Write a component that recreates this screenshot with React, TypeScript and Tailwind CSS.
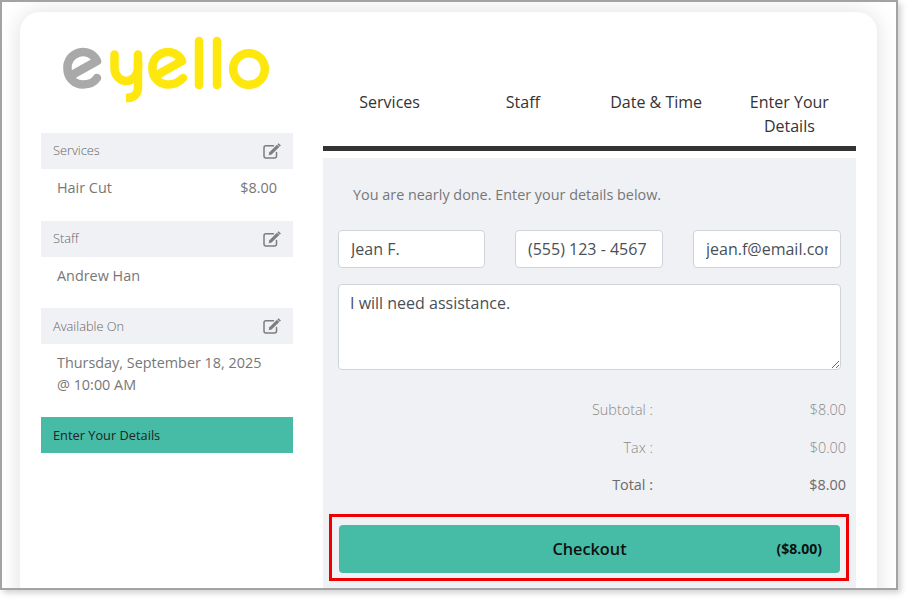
import React from "react";

function Logo() {
  return (
    <svg viewBox="60 35 215 70" className="block w-[215px] h-[70px] ml-[19px]" fill="none" strokeLinecap="round" strokeLinejoin="round">
      <path d="M72 75 L97 61 A15.5 15.5 0 0 0 67.5 69 A15.5 15.5 0 0 0 83 84.5 C90 84.5 94 82.5 97 78" stroke="#a9a9a9" strokeWidth="8.5" />
      <g stroke="#fde70c" strokeWidth="8.5">
        <path d="M114.5 54.5 V68 A11.75 13 0 0 0 138 68 V54.5" />
        <path d="M138 62 V87 Q138 98 126 98" strokeLinecap="butt" strokeWidth="8.5" />
        <path d="M157 75 L182 61 A15.5 15.5 0 0 0 152.5 69 A15.5 15.5 0 0 0 168 84.5 C174 84.5 179 82.5 183 78" />
        <path d="M199 41 V85" />
        <path d="M217 41 V85" />
        <circle cx="249" cy="69" r="15.8" />
      </g>
    </svg>
  );
}

function EditIcon() {
  return (
    <svg viewBox="0 0 18 16" className="block w-[18px] h-4 text-[#7d7d7d]" fill="none">
      <path d="M10.5 2.8 H3 A2 2 0 0 0 1 4.8 V13 A2 2 0 0 0 3 15 H11.5 A2 2 0 0 0 13.5 13 V9.5" stroke="currentColor" strokeWidth="1.5" strokeLinecap="round" />
      <path d="M14 1.8 L16.3 4.1 L8.6 11.5 L5.7 12.2 L6.4 9.3 Z" fill="currentColor" />
      <path d="M15 .8 L17.3 3.1" stroke="currentColor" strokeWidth="1.6" />
    </svg>
  );
}

function SideHeader({ title, textClass = "" }: { title: string; textClass?: string }) {
  return (
    <div className="flex items-center justify-between h-9 bg-[#f0f1f5] pl-3 pr-3">
      <span className={`text-[12.8px] font-light text-[#666] ${textClass}`}>{title}</span>
      <EditIcon />
    </div>
  );
}

function Row({ label, value, strong, className }: { label: string; value: string; strong?: boolean; className: string }) {
  return (
    <div className={`flex ml-[15px] mr-[10px] text-[14.4px] leading-[22px] ${strong ? "text-[#6b6b6b]" : "font-light text-[#888]"} ${className}`}>
      <span className="w-[315px] text-right">{label}</span>
      <span className="flex-1 text-right">{value}</span>
    </div>
  );
}

const field = "w-full min-w-0 h-[38px] px-3 bg-white border border-[#ced4da] rounded text-base text-[#495057] outline-none";

export default function App() {
  return (
    <div className="w-[910px] h-[602px] bg-white overflow-hidden font-['Open_Sans',sans-serif]">
      <div className="w-[898px] h-[590px] border-2 border-[#a3a3a3] bg-white overflow-hidden shadow-[3px_3px_6px_rgba(0,0,0,0.18)]">
        <div className="ml-[18px] mt-[10px] w-[857px] h-[640px] bg-white rounded-[20px] shadow-[0_0_22px_rgba(0,0,0,0.13)] pl-[21px] pr-[21px] flex gap-[30px]">
          <aside className="w-[252px] shrink-0">
            <div className="h-[121px] pt-[23px]">
              <Logo />
            </div>
            <SideHeader title="Services" />
            <div className="flex justify-between px-4 h-[52px] pt-2 text-[14.4px] leading-[22px] text-[#777]">
              <span>Hair Cut</span>
              <span>$8.00</span>
            </div>
            <SideHeader title="Staff" />
            <div className="px-4 h-[51px] pt-2 text-[14.4px] leading-[22px] text-[#777]">Andrew Han</div>
            <SideHeader title="Available On" textClass="pt-[2px]" />
            <div className="px-4 h-[73px] pt-2 text-[14.4px] leading-[22px] text-[#777]">
              Thursday, September 18, 2025
              <br />@ 10:00 AM
            </div>
            <div className="flex items-center h-9 px-3 pt-[2px] bg-[#46bca7] text-[12.8px] text-[#222]">Enter Your Details</div>
          </aside>
          <main className="w-[533px] shrink-0">
            <div className="grid grid-cols-4 pt-[78px] h-[134px] text-base leading-6 text-center text-[#333]">
              <div>Services</div>
              <div>Staff</div>
              <div>Date &amp; Time</div>
              <div className="px-6">Enter Your Details</div>
            </div>
            <div className="h-[5px] bg-[#333]" />
            <div className="mt-[7px] h-[480px] bg-[#f0f1f5] pt-[26px]">
              <p className="pl-[30px] text-[14.4px] leading-[22px] text-[#777]">You are nearly done. Enter your details below.</p>
              <div className="mt-6 mx-[15px] grid grid-cols-[147px_148px_148px] gap-[30px]">
                <input readOnly value="Jean F." className={field} />
                <input readOnly value="(555) 123 - 4567" className={field} />
                <input readOnly value="jean.f@email.com" className={field} />
              </div>
              <div className="mt-4 mx-[15px]">
                <textarea
                  readOnly
                  value="I will need assistance."
                  className="block w-full h-[86px] pl-[11px] pr-3 py-[6px] bg-white border border-[#ced4da] rounded text-base leading-6 text-[#495057] outline-none"
                />
              </div>
              <Row label="Subtotal :" value="$8.00" className="mt-[29px]" />
              <Row label="Tax :" value="$0.00" className="mt-4" />
              <Row label="Total :" value="$8.00" strong className="mt-[15px]" />
              <div className="mt-[18px] ml-[6px] w-[520px] border-[3px] border-[#ee0000] pt-2 pb-[5px] pl-[7px] pr-[6px]">
                <div className="grid grid-cols-[1fr_auto_1fr] items-center h-12 px-[18px] rounded bg-[#46bca7] text-[#111]">
                  <span />
                  <span className="text-[16.3px] font-semibold">Checkout</span>
                  <span className="justify-self-end text-sm font-bold">($8.00)</span>
                </div>
              </div>
            </div>
          </main>
        </div>
      </div>
    </div>
  );
}
